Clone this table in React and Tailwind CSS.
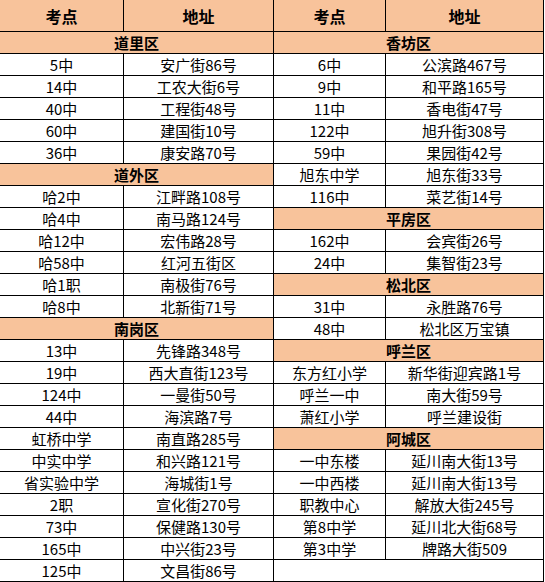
import React from "react";

const left = [
  { region: "道里区" },
  ["5中", "安广街86号"],
  ["14中", "工农大街6号"],
  ["40中", "工程街48号"],
  ["60中", "建国街10号"],
  ["36中", "康安路70号"],
  { region: "道外区" },
  ["哈2中", "江畔路108号"],
  ["哈4中", "南马路124号"],
  ["哈12中", "宏伟路28号"],
  ["哈58中", "红河五街区"],
  ["哈1职", "南极街76号"],
  ["哈8中", "北新街71号"],
  { region: "南岗区" },
  ["13中", "先锋路348号"],
  ["19中", "西大直街123号"],
  ["124中", "一曼街50号"],
  ["44中", "海滨路7号"],
  ["虹桥中学", "南直路285号"],
  ["中实中学", "和兴路121号"],
  ["省实验中学", "海城街1号"],
  ["2职", "宣化街270号"],
  ["73中", "保健路130号"],
  ["165中", "中兴街23号"],
  ["125中", "文昌街86号"],
];

const right = [
  { region: "香坊区" },
  ["6中", "公滨路467号"],
  ["9中", "和平路165号"],
  ["11中", "香电街47号"],
  ["122中", "旭升街308号"],
  ["59中", "果园街42号"],
  ["旭东中学", "旭东街33号"],
  ["116中", "菜艺街14号"],
  { region: "平房区" },
  ["162中", "会宾街26号"],
  ["24中", "集智街23号"],
  { region: "松北区" },
  ["31中", "永胜路76号"],
  ["48中", "松北区万宝镇"],
  { region: "呼兰区" },
  ["东方红小学", "新华街迎宾路1号"],
  ["呼兰一中", "南大街59号"],
  ["萧红小学", "呼兰建设街"],
  { region: "阿城区" },
  ["一中东楼", "延川南大街13号"],
  ["一中西楼", "延川南大街13号"],
  ["职教中心", "解放大街245号"],
  ["第8中学", "延川北大街68号"],
  ["第3中学", "牌路大街509"],
  { empty: true },
];

// one half-row: either a merged district row, a merged blank row, or two cells
function Cells({ row }) {
  if (row.empty) {
    return <div className="col-span-2 bg-white" />;
  }
  if (row.region) {
    return (
      <div className="col-span-2 flex items-center justify-center bg-[#f8c39b] text-[15px] font-bold">
        {row.region}
      </div>
    );
  }
  return (
    <>
      <div className="flex items-center justify-center bg-white">{row[0]}</div>
      <div className="flex items-center justify-center bg-white">{row[1]}</div>
    </>
  );
}

export default function App() {
  return (
    <div className="w-[545px] h-[582px] bg-white overflow-hidden">
      <div
        className="grid w-[544px] grid-cols-[123px_149px_111px_157px] grid-rows-[31px_repeat(25,21px)] gap-px border-r border-b border-black bg-black text-[15px] leading-none text-black"
        style={{ fontFamily: '"Noto Sans CJK SC", "Noto Sans", sans-serif' }}
      >
        {["考点", "地址", "考点", "地址"].map((h, i) => (
          <div key={i} className="flex items-center justify-center bg-[#f8c39b] text-[16px] font-bold">
            {h}
          </div>
        ))}
        {left.map((row, i) => (
          <React.Fragment key={i}>
            <Cells row={row} />
            <Cells row={right[i]} />
          </React.Fragment>
        ))}
      </div>
    </div>
  );
}
